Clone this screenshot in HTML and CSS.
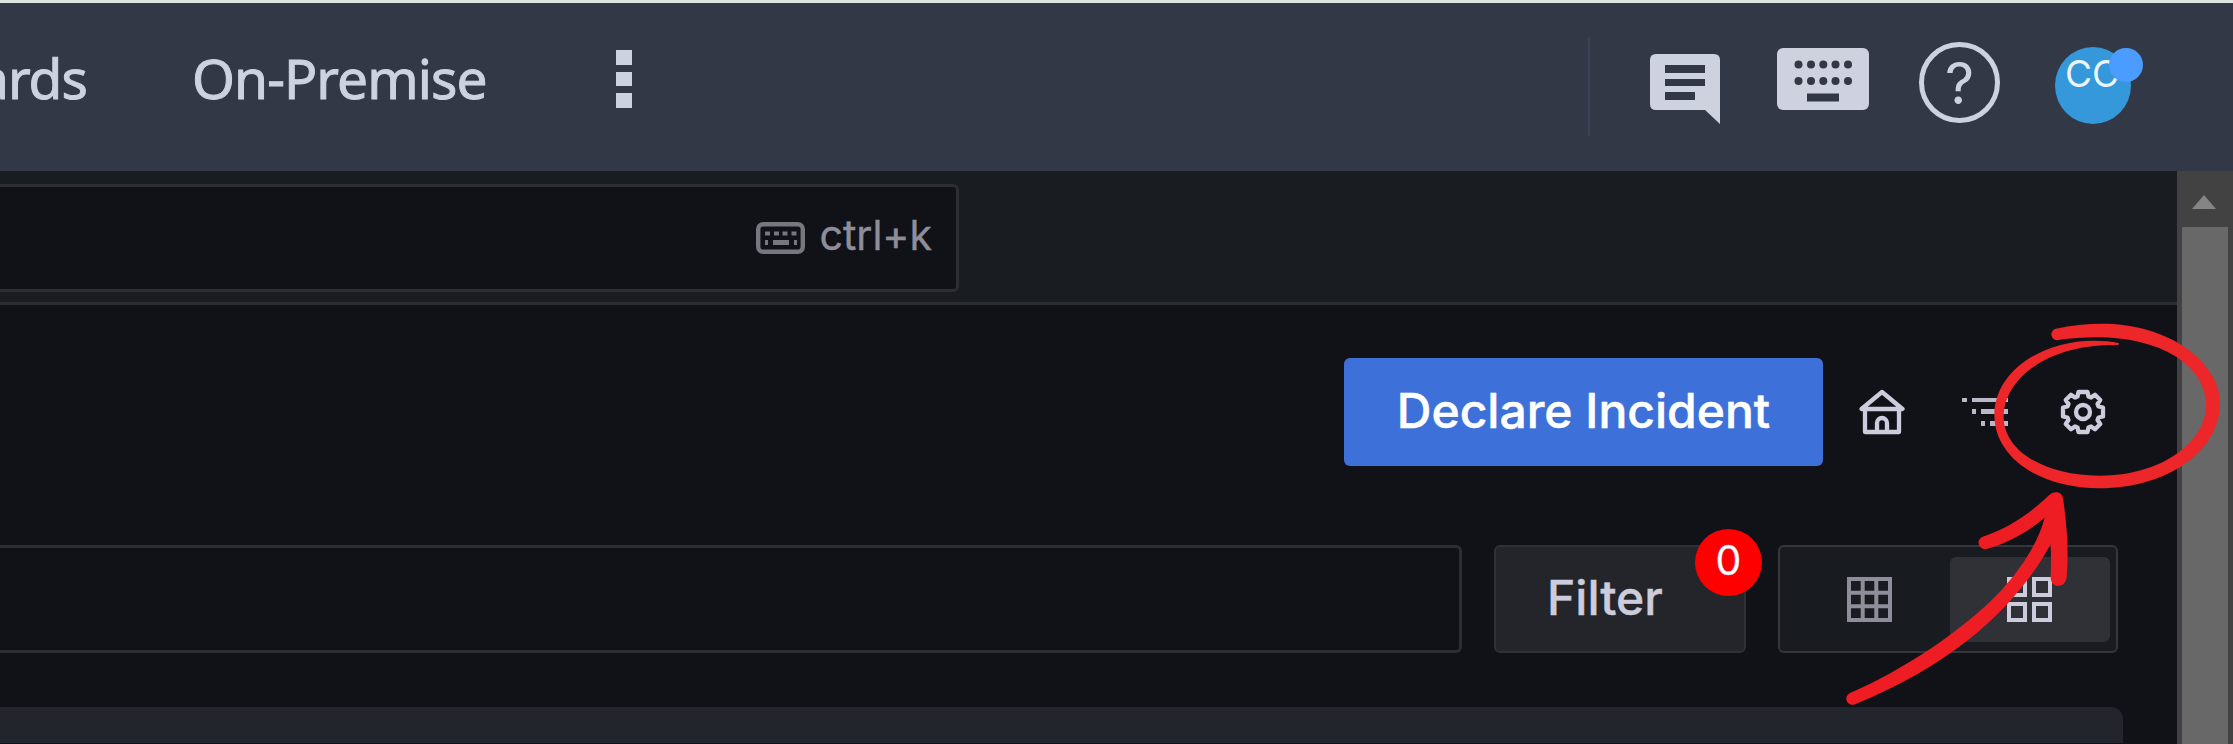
FILE: index.html
```html
<!DOCTYPE html>
<html lang="en">
<head>
<meta charset="utf-8">
<title>Incident dashboard</title>
<link rel="stylesheet" href="styles.css">
</head>
<body>
<div class="page">
  <header class="topnav">
    <nav class="nav-links">
      <a class="nav-link clipped">ards</a>
      <a class="nav-link premise">On-Premise</a>
      <span class="more"><i></i><i></i><i></i></span>
    </nav>
    <div class="nav-tools">
      <svg class="icon-comment" viewBox="0 0 70 70"><path fill="#ced2de" d="M6 0H64Q70 0 70 6V70L55 56H6Q0 56 0 50V6Q0 0 6 0Z"/><path fill="#323846" d="M15 11h40v8H15zM15 25h40v7H15zM15 38h30v8H15z"/></svg>
      <svg class="icon-keys" viewBox="0 0 92 62"><rect width="92" height="62" rx="6" fill="#ced2de"/><g fill="#323846"><circle cx="21.500" cy="16.500" r="4"/><circle cx="34" cy="16.500" r="4"/><circle cx="46.300" cy="16.500" r="4"/><circle cx="58.500" cy="16.500" r="4"/><circle cx="71" cy="16.500" r="4"/><circle cx="21.500" cy="33" r="4"/><circle cx="34" cy="33" r="4"/><circle cx="46.300" cy="33" r="4"/><circle cx="58.500" cy="33" r="4"/><circle cx="71" cy="33" r="4"/><path d="M30 45.500h32v8H30z"/></g></svg>
      <span class="help">?</span>
      <span class="avatar">CC<i class="status"></i></span>
    </div>
  </header>
  <div class="body">
    <main class="content">
      <div class="command-bar">
        <div class="search">
          <svg class="icon-kbd" viewBox="0 0 49 32"><rect x="2.200" y="2.200" width="44.600" height="27.600" rx="5" fill="none" stroke="#777780" stroke-width="4.400"/><path fill="#777780" d="M9 9.500h5v4H9zM18 9.500h5v4h-5zM26.500 9.500h5v4h-5zM35.500 9.500h5v4h-5zM9 18h3v5H9zM17 18h16v5H17zM38 18h3v5h-3z"/></svg>
          <span class="shortcut">ctrl+k</span>
        </div>
      </div>
      <div class="actions">
        <button class="declare">Declare Incident</button>
        <svg class="icon-home" viewBox="0 0 46 46" fill="none" stroke="#ccccdc" stroke-width="4.300" stroke-linejoin="round" stroke-linecap="round"><path d="M2.500 20 23 3 43.500 20ZM6 21V43H40V21M18 43V34a5 5 0 0 1 10 0v9"/></svg>
        <svg class="icon-list" viewBox="0 0 46 30" fill="#b9b9c9"><path d="M0 1h5v4H0zM10 1h36v4H10zM10 12h4v5h-4zM19 12h27v5H19zM19 24h4v5h-4zM28 24h18v5H28z"/></svg>
        <svg class="icon-gear" viewBox="-23 -23 46 46" fill="none" stroke="#ccccdc" stroke-width="4.300" stroke-linejoin="round"><circle r="7"/><path d="M-4.500-20H4.500L5.500-15.500 8-14.500 12-17.300 17.300-12 14.500-8 15.500-5.500 20-4.500V4.500L15.500 5.500 14.500 8 17.300 12 12 17.300 8 14.500 5.500 15.500 4.500 20H-4.500L-5.500 15.500-8 14.500-12 17.300-17.300 12-14.500 8-15.500 5.500-20 4.500V-4.500L-15.500-5.500-14.500-8-17.300-12-12-17.300-8-14.500-5.500-15.500Z"/></svg>
      </div>
      <div class="filters">
        <div class="query"></div>
        <button class="filter">Filter<span class="count">0</span></button>
        <div class="view-toggle">
          <span class="view"><svg class="icon-grid" viewBox="0 0 45 45" fill="none" stroke="#8e8e9a" stroke-width="4"><path d="M2 2h41v41H2zM15.700 2v41M29.300 2v41M2 15.700h41M2 29.300h41"/></svg></span>
          <span class="view active"><svg class="icon-grid" viewBox="0 0 45 45" fill="none" stroke="#ccccdc" stroke-width="4"><path d="M2 2h16v16H2zM27 2h16v16H27zM2 27h16v16H2zM27 27h16v16H27z"/></svg></span>
        </div>
      </div>
      <section class="panel"></section>
    </main>
    <aside class="scrollbar">
      <i class="scroll-up"></i>
      <i class="thumb"></i>
    </aside>
  </div>
  <svg class="annotation" viewBox="0 0 2233 744">
    <g transform="translate(1820 310) scale(.33333)"><path fill="#ec2629" d="M708 56C800 36 900 36 975 58C1110 95 1200 185 1200 280C1200 425 1040 535 840 535C655 535 523 440 523 315C523 185 665 92 820 92Q865 92 895 99Q900 103 893 105C680 100 551 210 551 320C551 420 670 497 840 497C1020 497 1158 400 1158 285C1158 165 1020 82 830 82C790 82 750 85 715 90A17 17 0 0 1 708 56Z"/></g>
    <g transform="translate(1820 470) scale(.33333)"><path fill="#ee1d24" d="M90 669C250 600 430 480 540 365C610 290 655 215 674 143C620 188 560 220 502 236A18.500 18.500 0 0 1 488 200C560 175 620 140 685 77C703 60 726 64 729 85C740 160 747 240 740 322C736 357 690 358 692 318Q694 270 692 223C600 390 430 570 105 703A18.500 18.500 0 0 1 90 669Z"/></g>
  </svg>
</div>
</body>
</html>
```
FILE: styles.css
```css
* { box-sizing: border-box; }
body { margin: 0; background: #111217; font-family: Inter, "Liberation Sans", sans-serif; }
svg { display: block; flex: none; }
button { font-family: inherit; margin: 0; padding: 0; }
.page { position: relative; width: 2233px; height: 744px; overflow: hidden; display: flex; flex-direction: column; }
.topnav { height: 171px; flex: none; background: #323846; border-top: 3px solid #dde5e1; display: flex; justify-content: space-between; }
.nav-links { display: flex; align-items: flex-start; padding-top: 33px; }
.nav-link { font-family: "Noto Sans", sans-serif; font-size: 55px; line-height: 84px; letter-spacing: -0.9px; -webkit-text-stroke: 1px #ced2de; color: #ced2de; white-space: nowrap; }
.clipped { width: 87px; margin-right: 105px; display: flex; justify-content: flex-end; }
.premise { width: 300px; }
.more { display: flex; flex-direction: column; gap: 7px; margin: 14px 0 0 124px; }
.more i { width: 16px; height: 14.5px; background: #ced2de; }
.nav-tools { display: flex; align-items: flex-start; width: 645px; height: 99px; margin-top: 34px; border-left: 2px solid #38445a; padding-left: 60px; }
.icon-comment { width: 70px; height: 70px; margin-top: 17px; }
.icon-keys { width: 92px; height: 62px; margin: 11px 0 0 57px; }
.help { width: 81px; height: 81px; margin: 5px 0 0 50px; border: 5px solid #ced2de; border-radius: 50%; font-family: Inter, sans-serif; font-size: 57px; line-height: 73px; text-align: center; color: #ced2de; }
.avatar { position: relative; width: 76px; height: 77px; margin: 10px 0 0 55px; border-radius: 50%; background: #3498db; font-size: 37px; line-height: 54px; padding-left: 10px; color: #eaf5fc; }
.status { position: absolute; left: 54px; top: 1px; width: 34px; height: 34px; border-radius: 50%; background: #4a9cff; }
.body { flex: 1; display: flex; min-height: 0; }
.content { flex: 1; min-width: 0; display: flex; flex-direction: column; }
.command-bar { height: 134px; flex: none; background: #191c20; border-bottom: 3px solid #2b2d31; padding-top: 13px; }
.search { width: 959px; height: 108px; border: 3px solid #2d2e33; border-left: 0; border-radius: 0 6px 6px 0; background: #111217; display: flex; align-items: center; justify-content: flex-end; gap: 15px; padding-right: 24px; }
.icon-kbd { width: 49px; height: 32px; }
.shortcut { font-size: 41px; line-height: 48px; color: #8e8e9a; -webkit-text-stroke: .4px #8e8e9a; margin-top: -6px; }
.actions { display: flex; align-items: center; height: 108px; margin-top: 53px; flex: none; padding-left: 1344px; }
.declare { width: 479px; height: 108px; border: 0; border-radius: 6px; background: #3d71d9; color: #fff; font-size: 48px; font-weight: 500; white-space: nowrap; padding-bottom: 3px; -webkit-text-stroke: .5px #fff; }
.icon-home { width: 46px; height: 46px; margin-left: 36px; }
.icon-list { width: 46px; height: 30px; margin-left: 57px; }
.icon-gear { width: 46px; height: 46px; margin-left: 52px; }
.filters { display: flex; height: 108px; margin-top: 79px; flex: none; }
.query { width: 1462px; border: 3px solid #2d2e33; border-left: 0; border-radius: 0 6px 6px 0; }
.filter { position: relative; width: 252px; margin-left: 32px; border: 2px solid #303136; border-radius: 6px; background: #24252a; color: #ccccdc; font-size: 48px; font-weight: 500; text-align: left; padding: 0 0 3px 51px; -webkit-text-stroke: .4px #ccccdc; }
.count { position: absolute; left: 199px; top: -18px; width: 67px; height: 67px; border-radius: 50%; background: #f00; color: #fff; font-size: 41px; font-weight: 400; line-height: 63px; text-align: center; }
.view-toggle { width: 340px; margin-left: 32px; border: 2px solid #36373c; border-radius: 6px; background: #181b1f; display: flex; padding: 10px 6px 9px 9px; }
.view { flex: 1; display: flex; align-items: center; justify-content: center; border-radius: 6px; }
.active { background: #2f3136; }
.icon-grid { width: 45px; height: 45px; }
.panel { width: 2123px; height: 36px; flex: none; margin-top: 54px; background: #23252d; border-radius: 0 12px 0 0; }
.scrollbar { width: 56px; background: #424242; display: flex; flex-direction: column; align-items: flex-start; padding-left: 5px; }
.scroll-up { border: 12.5px solid transparent; border-top: 0; border-bottom: 14px solid #858585; margin: 24px 0 18px 10px; }
.thumb { flex: 1; width: 46px; background: #686868; }
.annotation { position: absolute; left: 0; top: 0; width: 2233px; height: 744px; }
```
